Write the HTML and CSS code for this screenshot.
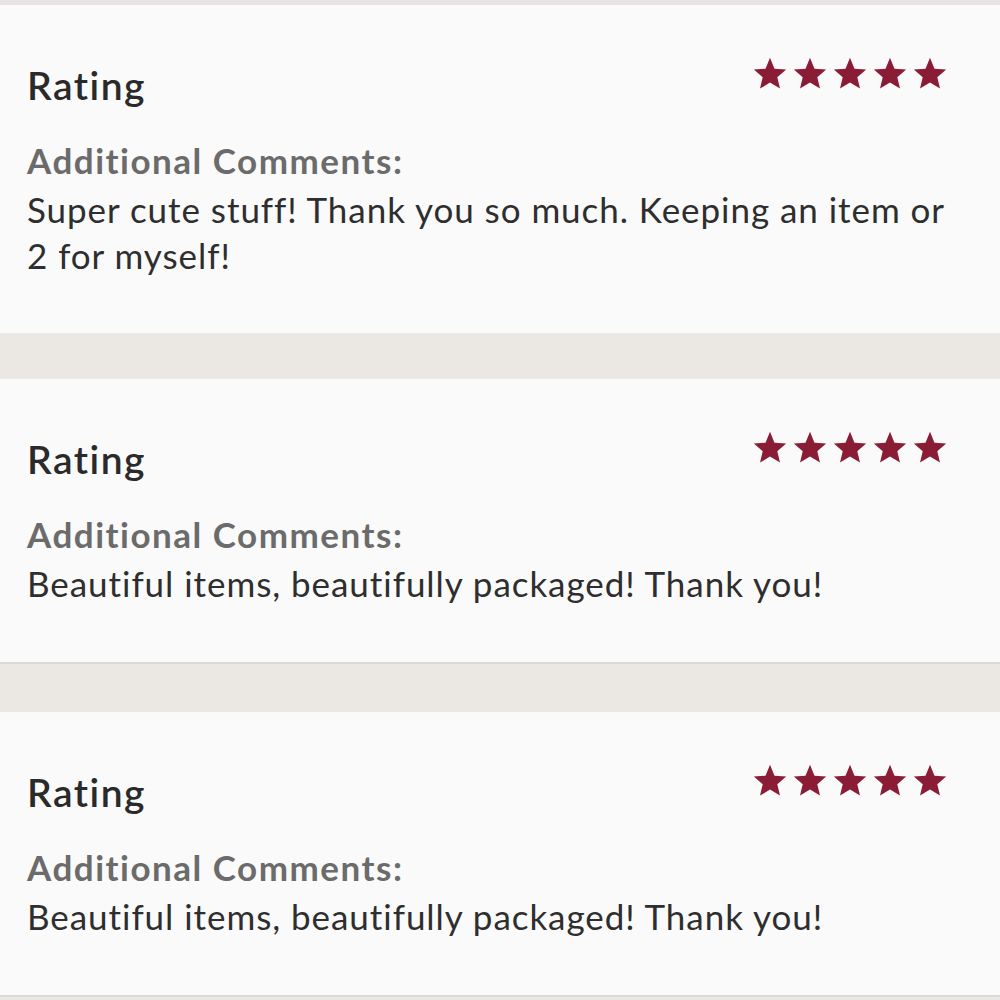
FILE: index.html
```html
<!DOCTYPE html>
<html lang="en">
<head>
<meta charset="utf-8">
<title>Reviews</title>
<link rel="stylesheet" href="styles.css">
</head>
<body>
<div class="top-strip"></div>
<main class="reviews">
  <section class="card">
    <div class="card-head">
      <h2 class="rating-title">Rating</h2>
      <div class="stars" aria-label="5 stars">
        <svg class="star" viewBox="0 0 24 24"><polygon points="12,0.6 15.17,8.23 23.41,8.89 17.14,14.27 19.05,22.31 12,18 4.95,22.31 6.86,14.27 0.59,8.89 8.83,8.23"/></svg>
        <svg class="star" viewBox="0 0 24 24"><polygon points="12,0.6 15.17,8.23 23.41,8.89 17.14,14.27 19.05,22.31 12,18 4.95,22.31 6.86,14.27 0.59,8.89 8.83,8.23"/></svg>
        <svg class="star" viewBox="0 0 24 24"><polygon points="12,0.6 15.17,8.23 23.41,8.89 17.14,14.27 19.05,22.31 12,18 4.95,22.31 6.86,14.27 0.59,8.89 8.83,8.23"/></svg>
        <svg class="star" viewBox="0 0 24 24"><polygon points="12,0.6 15.17,8.23 23.41,8.89 17.14,14.27 19.05,22.31 12,18 4.95,22.31 6.86,14.27 0.59,8.89 8.83,8.23"/></svg>
        <svg class="star" viewBox="0 0 24 24"><polygon points="12,0.6 15.17,8.23 23.41,8.89 17.14,14.27 19.05,22.31 12,18 4.95,22.31 6.86,14.27 0.59,8.89 8.83,8.23"/></svg>
      </div>
    </div>
    <h3 class="comments-label">Additional Comments:</h3>
    <p class="comments-text">Super cute stuff! Thank you so much. Keeping an item or 2 for myself!</p>
  </section>
  <div class="gap"></div>
  <section class="card card-bordered">
    <div class="card-head">
      <h2 class="rating-title">Rating</h2>
      <div class="stars" aria-label="5 stars">
        <svg class="star" viewBox="0 0 24 24"><polygon points="12,0.6 15.17,8.23 23.41,8.89 17.14,14.27 19.05,22.31 12,18 4.95,22.31 6.86,14.27 0.59,8.89 8.83,8.23"/></svg>
        <svg class="star" viewBox="0 0 24 24"><polygon points="12,0.6 15.17,8.23 23.41,8.89 17.14,14.27 19.05,22.31 12,18 4.95,22.31 6.86,14.27 0.59,8.89 8.83,8.23"/></svg>
        <svg class="star" viewBox="0 0 24 24"><polygon points="12,0.6 15.17,8.23 23.41,8.89 17.14,14.27 19.05,22.31 12,18 4.95,22.31 6.86,14.27 0.59,8.89 8.83,8.23"/></svg>
        <svg class="star" viewBox="0 0 24 24"><polygon points="12,0.6 15.17,8.23 23.41,8.89 17.14,14.27 19.05,22.31 12,18 4.95,22.31 6.86,14.27 0.59,8.89 8.83,8.23"/></svg>
        <svg class="star" viewBox="0 0 24 24"><polygon points="12,0.6 15.17,8.23 23.41,8.89 17.14,14.27 19.05,22.31 12,18 4.95,22.31 6.86,14.27 0.59,8.89 8.83,8.23"/></svg>
      </div>
    </div>
    <h3 class="comments-label">Additional Comments:</h3>
    <p class="comments-text">Beautiful items, beautifully packaged! Thank you!</p>
  </section>
  <div class="gap"></div>
  <section class="card card-bordered">
    <div class="card-head">
      <h2 class="rating-title">Rating</h2>
      <div class="stars" aria-label="5 stars">
        <svg class="star" viewBox="0 0 24 24"><polygon points="12,0.6 15.17,8.23 23.41,8.89 17.14,14.27 19.05,22.31 12,18 4.95,22.31 6.86,14.27 0.59,8.89 8.83,8.23"/></svg>
        <svg class="star" viewBox="0 0 24 24"><polygon points="12,0.6 15.17,8.23 23.41,8.89 17.14,14.27 19.05,22.31 12,18 4.95,22.31 6.86,14.27 0.59,8.89 8.83,8.23"/></svg>
        <svg class="star" viewBox="0 0 24 24"><polygon points="12,0.6 15.17,8.23 23.41,8.89 17.14,14.27 19.05,22.31 12,18 4.95,22.31 6.86,14.27 0.59,8.89 8.83,8.23"/></svg>
        <svg class="star" viewBox="0 0 24 24"><polygon points="12,0.6 15.17,8.23 23.41,8.89 17.14,14.27 19.05,22.31 12,18 4.95,22.31 6.86,14.27 0.59,8.89 8.83,8.23"/></svg>
        <svg class="star" viewBox="0 0 24 24"><polygon points="12,0.6 15.17,8.23 23.41,8.89 17.14,14.27 19.05,22.31 12,18 4.95,22.31 6.86,14.27 0.59,8.89 8.83,8.23"/></svg>
      </div>
    </div>
    <h3 class="comments-label">Additional Comments:</h3>
    <p class="comments-text">Beautiful items, beautifully packaged! Thank you!</p>
  </section>
  <div class="gap"></div>
</main>
</body>
</html>
```
FILE: styles.css
```css
html, body {
  margin: 0;
  padding: 0;
}
body {
  background: #ebe8e3;
  font-family: Lato, "Noto Sans", "Liberation Sans", sans-serif;
  font-variant-ligatures: none;
  width: 1000px;
  overflow: hidden;
}
.top-strip {
  height: 5px;
  background: #e8e3e3;
}
.reviews {
  display: flex;
  flex-direction: column;
}
.card {
  background: #fafafa;
  padding: 56px 30px 56px 27px;
  height: 328px;
  box-sizing: border-box;
}
.card-bordered {
  height: 285px;
  border-bottom: 2px solid #dcd8d7;
}
.gap {
  height: 46px;
  background: #ebe8e3;
}
.card-bordered + .gap {
  height: 48px;
}
.card-head {
  display: flex;
  justify-content: space-between;
  align-items: flex-start;
}
.rating-title {
  margin: 0;
  font-size: 39px;
  line-height: 48px;
  font-weight: 600;
  letter-spacing: 1.5px;
  color: #2a2a2a;
}
.stars {
  display: flex;
  gap: 6px;
  margin: -4px 23px 0 0;
}
.star {
  width: 34px;
  height: 34px;
  fill: #8a1c36;
}
.comments-label {
  margin: 28px 0 0;
  font-size: 35px;
  line-height: 46px;
  font-weight: 700;
  letter-spacing: 1.5px;
  color: #6b6b6b;
}
.comments-text {
  margin: 3px 0 0;
  font-size: 35px;
  line-height: 46px;
  letter-spacing: 0.95px;
  color: #2e2e2e;
}
```
